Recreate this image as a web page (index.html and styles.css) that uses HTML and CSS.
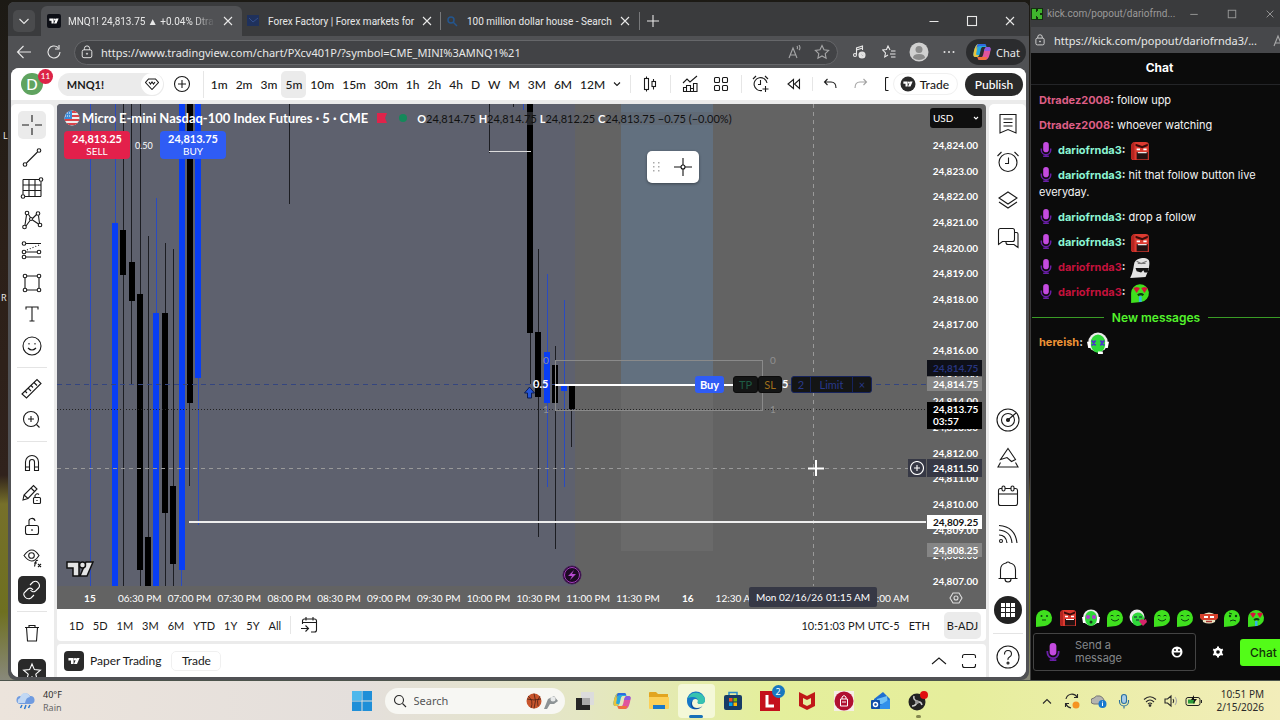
FILE: index.html
```html
<!DOCTYPE html>
<html lang="en">
<head>
  <meta charset="UTF-8">
  <meta name="viewport" content="width=device-width, initial-scale=1.0">
  <title>MNQ1! 24,813.75</title>
  <link rel="stylesheet" href="styles.css">
</head>
<body>
  <!-- shared symbols -->
  <svg class="defs" aria-hidden="true">
    <symbol id="tv" viewBox="0 0 28 16"><path d="M1 1h12v14H7V7H1zM20 1h7l-6 14h-7z"/><circle cx="16.5" cy="4" r="3"/></symbol>
    <symbol id="lock" viewBox="0 0 16 16"><rect x="2.500" y="5.500" width="11" height="9" rx="2"/><path d="M5 5.500V4a3 3 0 0 1 6 0v1.500"/><circle cx="8" cy="10" r=".7"/></symbol>
    <symbol id="close" viewBox="0 0 12 12"><path d="M2 2l8 8M10 2l-8 8"/></symbol>
    <symbol id="min" viewBox="0 0 12 12"><path d="M1.500 6.500h9"/></symbol>
    <symbol id="max" viewBox="0 0 12 12"><rect x="1.500" y="1.500" width="9" height="9"/></symbol>
    <symbol id="cross" viewBox="0 0 28 28"><path d="M14 4v7M14 17v7M4 14h7M17 14h7"/></symbol>
    <symbol id="mic" viewBox="0 0 12 16"><path d="M1 7v1.500a5 5 0 0 0 10 0V7M6 13v2M3 15.200h6" fill="none" stroke="#6a1fa8" stroke-width="1.600"/><rect x="3" y="0" width="6" height="11" rx="3" fill="#c44be0"/></symbol>
    <symbol id="copilot" viewBox="0 0 20 20">
      <path d="M7 2h5c2 0 2 1 2.500 3H11c-2 0-2 2-3 6s-2 4-4 4c-3 0-3-2-2-6S4 2 7 2z" fill="#25a8dd"/>
      <path d="M6 2C4 3 3 5 2 9c-1 4-1 6 2 6 1 0 2 0 3-2H5c-1 0-1-1-.5-3z" fill="#e8c33c"/>
      <path d="M7 2h5c1 0 2 .5 2.200 2H8c-2 0-3 1-4 4 1-4 1-6 3-6z" fill="#2f6be0"/>
      <path d="M13 18H8c-2 0-2-1-2.500-3H9c2 0 2-2 3-6s2-4 4-4c3 0 3 2 2 6s-2 7-5 7z" fill="#e0559c"/>
      <path d="M13 18H8c-2 0-2-1-2.500-3H15c0 2-1 3-2 3z" fill="#f0703c"/>
      <path d="M12 9c1-4 2-4 4-4 3 0 3 2 2 4z" fill="#8a5be0"/>
    </symbol>
    <symbol id="e-green" viewBox="0 0 18 18"><path d="M1 18V9a8 8 0 1 1 9 8z" fill="#3fe01e"/><circle cx="6.500" cy="7" r="1" fill="#0c4010"/><circle cx="12" cy="7" r="1" fill="#0c4010"/><path d="M7 11h4" stroke="#0c4010" fill="none"/></symbol>
    <symbol id="e-smile" viewBox="0 0 18 18"><path d="M1 18V9a8 8 0 1 1 9 8z" fill="#3fe01e"/><path d="M4.500 7q1.500-1.500 3 0M10.500 7q1.500-1.500 3 0M5 10q4 4 8 0" stroke="#0c4010" fill="none"/></symbol>
    <symbol id="e-think" viewBox="0 0 18 18"><path d="M1 18V9a8 8 0 1 1 9 8z" fill="#3fe01e"/><circle cx="7" cy="7" r="1.200" fill="#0c4010"/><circle cx="13" cy="7" r="1.200" fill="#0c4010"/><path d="M6 4l3 1M7 12q3-2 6 0" stroke="#0c4010" fill="none"/></symbol>
    <symbol id="e-love" viewBox="0 0 18 18"><path d="M1 18V9a8 8 0 1 1 9 8z" fill="#3fe01e"/><path d="M3 4.500l3-1 3 1L6 9zM10 4.500l3-1 3 1L13 9z" fill="#d8123c"/><path d="M7 11q3-2 5 0" stroke="#0c4010" stroke-width="2" fill="none"/><path d="M8 12h2.500v5H8z" fill="#33b4e8"/></symbol>
    <symbol id="e-red" viewBox="0 0 18 18"><path d="M1 16V5q0-4 4-4h9q3 0 3 3v13H2z" fill="#dc3a30"/><path d="M1 16V5q0-3 3-4v16z" fill="#b52520"/><path d="M5 2.500l6 2 5-2v2l-5 2-6-2z" fill="#3a0c0a"/><path d="M6 7.500h3M12 7.500h3" stroke="#fff" stroke-width="1.500"/><path d="M6 10h10v6.500H6z" fill="#231212"/><path d="M7 10.500h8" stroke="#fff"/></symbol>
    <symbol id="e-wojak" viewBox="0 0 18 18"><path d="M0 18C3 13 3 8 4 4c3-5 11-5 13-2 1 3 0 5 0 8l-3 7z" fill="#e4e4e4"/><path d="M6 3l4 2 5-2M7 5h7" stroke="#777" fill="none"/><path d="M5 9l12 0-1 4h-3l-1-2-2 2-4-1z" fill="#151515"/></symbol>
    <symbol id="e-phones" viewBox="0 0 18 18"><circle cx="9" cy="8.500" r="8" fill="#ececec"/><path d="M3 9a6 7 0 0 1 12 0c0 5-3 8-6 8s-6-3-6-8z" fill="#2fd83a"/><path d="M4 7l3 4M7 7l-3 4M11 7l3 4M14 7l-3 4" stroke="#4b35c8" stroke-width="1.500"/><path d="M0 8h3v5H1zM15 8h3l-1 5h-2zM9 16h4v2H9z" fill="#fff"/></symbol>
    <symbol id="e-pink" viewBox="0 0 18 18"><circle cx="9" cy="8.500" r="8" fill="#ececec"/><path d="M3 9a6 7 0 0 1 12 0c0 5-3 8-6 8s-6-3-6-8z" fill="#2fd83a"/><path d="M0 8h3v6H1zM15 8h3l-1 6h-2z" fill="#fff"/><circle cx="6" cy="8" r="2" fill="#b13ad0"/><circle cx="12" cy="8" r="2" fill="#b13ad0"/><circle cx="9" cy="13" r="1.500" fill="#153b18"/></symbol>
    <symbol id="e-heart" viewBox="0 0 18 18"><circle cx="8" cy="8" r="7.500" fill="#ececec"/><path d="M3 10a6 6 0 0 1 12-1c1 5-3 8-6 8s-6-2-6-7z" fill="#2fd83a"/><path d="M5 8h3M10 8h3M7 11h3" stroke="#123"/><path d="M10 12l3-2 2 1 2-1 1 3-4 4z" fill="#d6256b"/></symbol>
    <symbol id="e-burger" viewBox="0 0 18 18"><path d="M2 6q7-5 14 0l-1 7q-6 3-12 0z" fill="#e9e2c0"/><path d="M0 5h18v4l-2 2H2L0 9z" fill="#d4402c"/><path d="M4 8h4M10 8h4" stroke="#fff" stroke-width="2"/><path d="M6 12.500h6" stroke="#a33" stroke-width="1.500"/></symbol>
  </svg>

  <div class="desktop">
    <span class="desk-label desk-l">L</span>
    <span class="desk-label desk-r">R</span>

    <div class="windows">
      <main class="browser">
        <header class="tabs">
          <button class="tab-search" aria-label="Search tabs"><svg class="icon s12" viewBox="0 0 12 12"><path d="M1.500 4L6 8.500 10.500 4"/></svg></button>
          <div class="tab active">
            <svg class="fav" viewBox="0 0 14 14"><rect width="14" height="14" rx="2" fill="#0d0f16"/><use href="#tv" x="2" y="4" width="10" height="6" fill="#fff"/></svg>
            <span>MNQ1! 24,813.75 ▲ +0.04% Dtra</span>
            <button aria-label="Close tab"><svg class="icon s12"><use href="#close"/></svg></button>
          </div>
          <div class="tab">
            <svg class="fav" viewBox="0 0 14 14"><rect y="1" width="12" height="11" fill="#1f315c"/><path d="M2 4l4 4 5-4" stroke="#35508c" fill="none"/></svg>
            <span>Forex Factory | Forex markets for</span>
            <button aria-label="Close tab"><svg class="icon s12"><use href="#close"/></svg></button>
          </div>
          <div class="tab">
            <svg class="fav" viewBox="0 0 14 14"><circle cx="5" cy="6" r="3" stroke="#24568f" stroke-width="1.500" fill="none"/><path d="M7 8l4 4" stroke="#24568f" stroke-width="1.500"/></svg>
            <span>100 million dollar house - Search</span>
            <button aria-label="Close tab"><svg class="icon s12"><use href="#close"/></svg></button>
          </div>
          <button class="new-tab" aria-label="New tab"><svg class="icon s12" viewBox="0 0 12 12"><path d="M6 0v12M0 6h12"/></svg></button>
          <div class="win-controls">
            <button aria-label="Minimize"><svg class="icon s12"><use href="#min"/></svg></button>
            <button aria-label="Maximize"><svg class="icon s12"><use href="#max"/></svg></button>
            <button aria-label="Close"><svg class="icon s12"><use href="#close"/></svg></button>
          </div>
        </header>

        <div class="navbar">
          <button class="nav-btn" aria-label="Back"><svg class="icon s16" viewBox="0 0 16 16"><path d="M15 8H1.500M7.500 2l-6 6 6 6"/></svg></button>
          <button class="nav-btn" aria-label="Reload"><svg class="icon s16" viewBox="0 0 16 16"><path d="M14 8a6 6 0 1 1-2-4.500M13 1v4H9"/></svg></button>
          <label class="address">
            <svg class="icon s14"><use href="#lock"/></svg>
            <input type="text" aria-label="Address" value="https://www.tradingview.com/chart/PXcv401P/?symbol=CME_MINI%3AMNQ1%21">
            <svg class="icon s14 dim" viewBox="0 0 14 14"><path d="M1 13L5 3l4 10M2.500 10h5M9 4q1-1 0-3M11 5q2-2 0-5"/></svg>
            <svg class="icon s16 dim" viewBox="0 0 16 16"><path d="M8 1.500l2 4.300 4.600.6-3.400 3.200.9 4.700L8 12l-4.100 2.300.9-4.700L1.400 6.400 6 5.800z"/></svg>
          </label>
          <div class="nav-icons">
            <button aria-label="Media"><svg class="icon s14" viewBox="0 0 14 14"><circle cx="3" cy="10" r="1.500"/><path d="M4.500 10V3l6-2v4M4.500 5l6-2"/><circle cx="10" cy="10" r="3" fill="#ddd"/><path d="M9 8.500l2.500 1.500L9 11.500z" fill="#333"/></svg></button>
            <button aria-label="Favorites"><svg class="icon s14" viewBox="0 0 14 14"><path d="M8 5L6 1 4.500 4.500.8 5 3.500 8l-.8 4L6 10M9 6h4.500M8 9h5.500M9 12h4.500"/></svg></button>
            <button aria-label="Profile"><svg class="s20" viewBox="0 0 20 20"><circle cx="10" cy="10" r="9.500" fill="#d0d0d0"/><circle cx="10" cy="7.500" r="3.500" fill="#8b8b8b"/><path d="M4 16q0-4 6-4t6 4q-6 4-12 0z" fill="#8b8b8b"/></svg></button>
            <button aria-label="More"><svg class="s14" viewBox="0 0 14 14" fill="#e5e5e5"><circle cx="2.500" cy="7" r="1"/><circle cx="7" cy="7" r="1"/><circle cx="11.500" cy="7" r="1"/></svg></button>
          </div>
          <button class="copilot"><svg class="s20"><use href="#copilot"/></svg>Chat</button>
        </div>

        <div class="tv">
          <div class="tv-top">
            <div class="user">D<span class="badge">11</span></div>
            <button class="symbol">MNQ1!<span><svg class="icon s14" viewBox="0 0 14 14"><path d="M3.500 2h7L13.500 5.500 7 12.500.5 5.500zM4 5l1.500 2L7 5l1.500 2L10 5"/></svg></span></button>
            <button class="add" aria-label="Compare"><svg class="icon s18" viewBox="0 0 18 18"><circle cx="9" cy="9" r="7.500"/><path d="M9 5v8M5 9h8"/></svg></button>
            <div class="intervals">
              <button>1m</button><button>2m</button><button>3m</button><button class="on">5m</button><button>10m</button><button>15m</button><button>30m</button><button>1h</button><button>2h</button><button>4h</button><button>D</button><button>W</button><button>M</button><button>3M</button><button>6M</button><button>12M</button>
              <button aria-label="More intervals"><svg class="icon s8" viewBox="0 0 8 8"><path d="M1 2.500l3 3 3-3"/></svg></button>
            </div>
            <div class="tools">
              <button class="bar" aria-label="Candles"><svg class="icon s18" viewBox="0 0 18 18"><path d="M5.500 1.500v2M5.500 14.500v2M12.500 4v2.500M12.500 11.500v3"/><rect x="3.500" y="3.500" width="4" height="11"/><rect x="11" y="6.500" width="3.500" height="5"/></svg></button>
              <button class="bar" aria-label="Indicators"><svg class="icon s18" viewBox="0 0 18 18"><path d="M2 8l4-4 3 3 7-6M2.500 16.500v-4h3v-2h4v3h3v-5h3.500v8zM5.500 12.500v4M9.500 13v3.500M12.500 13v3.500"/></svg></button>
              <button class="near" aria-label="Templates"><svg class="icon s18" viewBox="0 0 18 18"><rect x="2.500" y="2.500" width="5" height="5" rx="1"/><rect x="10.500" y="2.500" width="5" height="5" rx="1"/><rect x="2.500" y="10.500" width="5" height="5" rx="1"/><rect x="10.500" y="10.500" width="5" height="5" rx="1"/></svg></button>
              <button class="bar" aria-label="Alert"><svg class="icon s18" viewBox="0 0 18 18"><path d="M15 8a6.500 6.500 0 1 0-5 7.500M8.500 5v4.500H6M1 4l3-3M13 1l3 3M13.500 11v6M10.500 14h6"/></svg></button>
              <button class="far" aria-label="Replay"><svg class="icon s14" viewBox="0 0 14 14"><path d="M6.500 2.500v9L1 7zM12.500 2.500v9L7.500 7z"/></svg></button>
              <button class="bar" aria-label="Undo"><svg class="icon s14" viewBox="0 0 14 14"><path d="M4.500 2L1.500 5l3 3M1.500 5H8q5 0 5 6"/></svg></button>
              <button class="far faded" aria-label="Redo"><svg class="icon s14" viewBox="0 0 14 14"><path d="M9.500 2l3 3-3 3M12.500 5H6q-5 0-5 6"/></svg></button>
              <svg class="icon far bracket" viewBox="0 0 4 14"><path d="M3.500.5h-2q-1 0-1 1v11q0 1 1 1h2"/></svg>
            </div>
            <button class="trade"><svg class="s16" viewBox="0 0 16 16"><circle cx="8" cy="8" r="7.500" fill="#2a2a2a"/><use href="#tv" x="3" y="5" width="10" height="6" fill="#fff"/></svg>Trade</button>
            <button class="publish">Publish</button>
          </div>

          <div class="tv-body">
            <nav class="left-tools">
              <div class="group g8">
                <button class="soft" aria-label="Cross"><svg class="icon s28"><use href="#cross"/></svg></button>
                <button aria-label="Trend line"><svg class="icon s28" viewBox="0 0 28 28"><path d="M8.500 20L19.500 9"/><circle cx="7" cy="21.500" r="1.800"/><circle cx="21" cy="7.500" r="1.800"/></svg></button>
                <button aria-label="Gann and Fibonacci"><svg class="icon s28" viewBox="0 0 28 28"><path d="M5 5.500h16M23 7.500v15M7 22.500h16M5 5.500v15M5 11h18M5 16.500h18M11 5.500v17M17 5.500v17"/><circle cx="23" cy="5.500" r="1.800"/><circle cx="5" cy="22.500" r="1.800"/></svg></button>
                <button aria-label="Patterns"><svg class="icon s28" viewBox="0 0 28 28"><circle cx="9" cy="7" r="1.800"/><circle cx="20" cy="7.500" r="1.800"/><circle cx="6.500" cy="21" r="1.800"/><circle cx="22" cy="19" r="1.800"/><circle cx="13" cy="13" r="1.500"/><path d="M8.500 9L7 19M10.500 8.500l2 3M14.500 12.500l4-4M20.500 9.500l1 8M8 20l4-5.500M14.500 14l6 4"/></svg></button>
                <button aria-label="Projection"><svg class="icon s28" viewBox="0 0 28 28"><circle cx="6" cy="6.500" r="1.800"/><circle cx="6" cy="15" r="1.800"/><circle cx="21" cy="15" r="1.800"/><circle cx="6" cy="20" r="1.800"/><path d="M8 6.500h15M8 15h11M8 20h15"/><path d="M9 13l12-5" stroke-dasharray="1 2"/></svg></button>
                <button aria-label="Shapes"><svg class="icon s28" viewBox="0 0 28 28"><path d="M9 7h10M9 21h10M7 9v10M21 9v10"/><circle cx="7" cy="7" r="1.800"/><circle cx="21" cy="7" r="1.800"/><circle cx="7" cy="21" r="1.800"/><circle cx="21" cy="21" r="1.800"/></svg></button>
                <button aria-label="Text"><svg class="icon s28" viewBox="0 0 28 28"><path d="M8 9.500V7h12v2.500M14 7v14M11.500 21h5"/></svg></button>
                <button aria-label="Emoji"><svg class="icon s28" viewBox="0 0 28 28"><circle cx="14" cy="14" r="9"/><path d="M10 16q4 4 8 0M11 11v1.500M17 11v1.500"/></svg></button>
              </div>
              <hr>
              <div class="group g2">
                <button aria-label="Measure"><svg class="icon s28" viewBox="0 0 28 28"><path d="M4 19L19 4.500l4 4L8.500 23zM7 16l2 2M10 13l3 3M13 10.500l2 2M16 7.500l3 3"/></svg></button>
                <button aria-label="Zoom in"><svg class="icon s28" viewBox="0 0 28 28"><circle cx="13" cy="13" r="7.500"/><path d="M13 10v6M10 13h6M18.500 18.500l3 3"/></svg></button>
              </div>
              <hr>
              <div class="group g5">
                <button aria-label="Magnet"><svg class="icon s28" viewBox="0 0 28 28"><path d="M7.500 21.500V13a6.500 6.500 0 0 1 13 0v8.500h-4V13a2.500 2.500 0 0 0-5 0v8.500zM7.500 18h4M16.500 18h4"/></svg></button>
                <button aria-label="Lock drawing mode"><svg class="icon s28" viewBox="0 0 28 28"><path d="M5 19l1-5L15.500 4.500l3.500 3.500L10 17.500zM6 14l4 3.500M13 7l3.500 3.500"/><rect x="15.500" y="16.500" width="7" height="6" rx="1"/><path d="M17 16.500v-2q2-3 4-1M19 19v1"/></svg></button>
                <button aria-label="Lock all"><svg class="icon s28" viewBox="0 0 28 28"><rect x="7.500" y="12.500" width="13" height="9" rx="2"/><path d="M11 12.500V9a3 3 0 0 1 6-1M14 16v2"/></svg></button>
                <button aria-label="Hide"><svg class="icon s28" viewBox="0 0 28 28"><path d="M6 11.500q8-11 15 0-7 11-15 0z"/><circle cx="13.500" cy="11.500" r="2.800"/><path d="M20 16.500q-2-1-2.500 2l-1 4M16 19h3M20 20l3 3M23 20l-3 3"/></svg></button>
                <button class="dark" aria-label="Link"><svg class="icon s28" viewBox="0 0 28 28"><path d="M12 9l3-3q3.500-2 5.500 1t0 5l-3 3q-3 2-5-1M16 19l-3 3q-3.500 2-6-1t0-5l3-3q3-2 5 1"/></svg></button>
              </div>
              <hr>
              <button aria-label="Remove"><svg class="icon s28" viewBox="0 0 28 28"><path d="M7 8.500h14M11 8.500v-2h6v2M8.500 8.500l1 13.500h9l1-13.500"/></svg></button>
              <button class="dark star" aria-label="Favorites toolbar"><svg class="icon s28" viewBox="0 0 28 28"><path d="M14 5l2.400 5.600 6 .5-4.600 4 1.400 6L14 17.900l-5.200 3.200 1.400-6-4.600-4 6-.5z"/></svg></button>
            </nav>

            <section class="center">
              <div class="chart">
                <div class="plot">
                  <svg class="candles" width="100%" height="100%">
                    <!-- session shading -->
                    <rect width="518" height="100%" fill="#5e616e"/>
                    <rect x="564" width="92" height="280" fill="#62707f"/>
                    <rect x="564" y="280" width="92" height="167" fill="#6a6a6a"/>
                    <!-- wicks -->
                    <path class="wick up" d="M33.500 0v482M58.500 0v482M99.500 94v388M124.500 0v482M141.500 0v421M466.500 0v6M490.500 170v213M507.500 196v187"/>
                    <path class="wick down" d="M66.500 0v482M74.500 0v280M83.500 0v482M91.500 132v350M108.500 139v343M116.500 145v337M132.500 0v382M232.500 0v100M432.500 0v49M456.500 0v3M473.500 0v280M481.500 145v288M498.500 242v203M514.500 282v61"/>
                    <!-- bodies -->
                    <path class="body-up" d="M55 119h6v363h-6zM96 209h6v273h-6zM122 0h6v466h-6zM138 0h6v274h-6zM487 248h6v51h-6zM504 282h6v5h-6z"/>
                    <path class="body-down" d="M63 126h6v45h-6zM72 158h6v39h-6zM80 190h6v276h-6zM88 433h6v49h-6zM105 209h6v200h-6zM113 382h6v78h-6zM130 0h6v299h-6zM470 0h6v229h-6zM478 228h6v65h-6zM495 261h6v38h-6zM512 282h6v23h-6z"/>
                    <!-- levels -->
                    <path d="M0 280.500h869" stroke="#34457f" stroke-dasharray="5 4"/>
                    <path d="M0 305.500h869" stroke="#222" stroke-dasharray="1 2"/>
                    <path d="M0 364.500h869M756.500 0v482" stroke="#999" stroke-dasharray="4 4"/>
                    <path d="M432 47.500h42" stroke="#ddd"/>
                    <path d="M132 418h737" stroke="#eee" stroke-width="2"/>
                    <rect x="498.500" y="256.500" width="207" height="50" fill="none" stroke="#8a8a8a"/>
                    <path d="M498 281h178" stroke="#fff" stroke-width="2"/>
                    <path d="M472.500 283l-5 6h3v5h4v-5h3z" fill="#2455d8" stroke="#0c1c50"/>
                    <path d="M759 356v16M751 364.500h16" stroke="#fff" stroke-width="2"/>
                    <text class="lvl" x="486" y="260">0</text>
                    <text class="lvl" x="486" y="309">1</text>
                    <text class="lvl" x="713" y="260">0</text>
                    <text class="lvl" x="713" y="309">1</text>
                    <text class="half" x="476" y="284">0.5</text>
                  </svg>

                  <div class="legend">
                    <div class="title">
                      <svg class="s16" viewBox="0 0 16 16"><clipPath id="round"><circle cx="8" cy="8" r="7.500"/></clipPath><g clip-path="url(#round)"><path fill="#eee" d="M0 0h16v16H0z"/><path d="M0 2h16M0 6h16M0 10h16M0 14h16" stroke="#d8434a" stroke-width="2"/><path d="M0 0h8v9H0z" fill="#3c8bd9"/><path d="M1 3h6M1 6h6" stroke="#fff" stroke-dasharray="1 1"/></g></svg>
                      <h1>Micro E-mini Nasdaq-100 Index Futures · 5 · CME</h1>
                      <svg class="flag" viewBox="0 0 10 10"><path d="M0 0h10L8 5l2 5H0z" fill="#e0234a"/></svg>
                      <span class="dot"></span>
                      <p class="ohlc"><b>O</b>24,814.75 <b>H</b>24,814.75 <b>L</b>24,812.25 <b>C</b>24,813.75 −0.75 (−0.00%)</p>
                    </div>
                    <div class="quotes">
                      <button class="sell"><b>24,813.25</b>SELL</button>
                      <span>0.50</span>
                      <button class="buy"><b>24,813.75</b>BUY</button>
                    </div>
                  </div>

                  <div class="float-tools">
                    <svg class="s8x14" viewBox="0 0 8 14" fill="#aaa"><path d="M0 2h1.500v1.500H0zM5 2h1.500v1.500H5zM0 6h1.500v1.500H0zM5 6h1.500v1.500H5zM0 10h1.500v1.500H0zM5 10h1.500v1.500H5z"/></svg>
                    <button aria-label="Cross"><svg class="icon s20" viewBox="0 0 20 20"><path d="M10 1v7M10 12v7M1 10h7M12 10h7"/><circle cx="10" cy="10" r="2"/></svg></button>
                  </div>

                  <div class="order">
                    <button class="o-buy">Buy</button>
                    <button class="tp">TP</button>
                    <button class="sl">SL</button>
                    <span class="o-five">5</span>
                    <div class="limit"><span>2</span><span>Limit</span><button aria-label="Cancel order">×</button></div>
                  </div>

                  <svg class="tv-logo" viewBox="0 0 28 16"><use href="#tv" width="28" height="16"/></svg>
                  <svg class="bolt" viewBox="0 0 20 20"><circle cx="10" cy="10" r="9" fill="#1d0a24" stroke="#49185c"/><circle cx="10" cy="10" r="7.500" fill="none" stroke="#a63cc0"/><path d="M12 5l-6 6h4l-2 4 6-6h-4z" fill="#b64ad0"/></svg>
                </div>

                <div class="prices">
                  <span>24,824.00</span><span>24,823.00</span><span>24,822.00</span><span>24,821.00</span><span>24,820.00</span><span>24,819.00</span><span>24,818.00</span><span>24,817.00</span><span>24,816.00</span><span>24,815.00</span><span>24,814.00</span><span>24,813.00</span><span>24,812.00</span><span>24,811.00</span><span>24,810.00</span><span>24,809.00</span><span>24,808.00</span><span>24,807.00</span>
                  <select class="currency" aria-label="Currency"><option>USD</option></select>
                  <svg class="icon currency-arrow" viewBox="0 0 8 8"><path d="M2 3l2 2 2-2"/></svg>
                  <div class="tag t-order">24,814.75</div>
                  <div class="tag t-grey t-mid">24,814.75</div>
                  <div class="tag t-last">24,813.75<br>03:57</div>
                  <div class="tag t-cross">24,811.50</div>
                  <button class="plus" aria-label="Add order"><svg class="icon s14" viewBox="0 0 14 14"><circle cx="7" cy="7" r="6.500"/><path d="M7 4v6M4 7h6"/></svg></button>
                  <div class="tag t-white">24,809.25</div>
                  <div class="tag t-grey t-low">24,808.25</div>
                </div>

                <div class="times">
                  <b>15</b><span>06:30 PM</span><span>07:00 PM</span><span>07:30 PM</span><span>08:00 PM</span><span>08:30 PM</span><span>09:00 PM</span><span>09:30 PM</span><span>10:00 PM</span><span>10:30 PM</span><span>11:00 PM</span><span>11:30 PM</span><b>16</b><span>12:30 AM</span><span></span><span></span><span>02:00 AM</span>
                  <div class="time-tag"><span>Mon 02/16/26</span><span>01:15 AM</span></div>
                </div>
                <button class="axis-set" aria-label="Axis settings"><svg class="icon s14" viewBox="0 0 14 14"><path d="M4 2h6l3 5-3 5H4L1 7z"/><circle cx="7" cy="7" r="2"/></svg></button>
              </div>

              <div class="ranges">
                <button>1D</button><button>5D</button><button>1M</button><button>3M</button><button>6M</button><button>YTD</button><button>1Y</button><button>5Y</button><button>All</button>
                <button class="goto" aria-label="Go to date"><svg class="icon s18" viewBox="0 0 18 18"><path d="M2.500 8V5q0-2 2-2h10q2 0 2 2v9q0 2-2 2H11M2.500 6.500h14M6 1v3.500M13 1v3.500M1 12.500h7M5.500 9.500l3 3-3 3"/></svg></button>
                <span class="clock">10:51:03 PM UTC-5</span>
                <button>ETH</button>
                <button class="adj">B-ADJ</button>
              </div>

              <footer class="panel">
                <svg class="s20" viewBox="0 0 20 20"><rect width="20" height="20" rx="4" fill="#2a2a2a"/><use href="#tv" x="4" y="6" width="12" height="8" fill="#fff"/></svg>
                <span>Paper Trading</span>
                <button class="panel-trade">Trade</button>
                <button class="up" aria-label="Open panel"><svg class="icon s16" viewBox="0 0 16 16"><path d="M1 11l7-6 7 6"/></svg></button>
                <button aria-label="Maximize panel"><svg class="icon s16" viewBox="0 0 16 16"><path d="M1.500 5V3.500q0-2 2-2h9q2 0 2 2V5M1.500 11v1.500q0 2 2 2h9q2 0 2-2V11"/></svg></button>
              </footer>
            </section>

            <nav class="right-tools">
              <button aria-label="Watchlist"><svg class="icon s24" viewBox="0 0 24 24"><path d="M4 2.500h16v18.500l-8-3.500L4 21zM7.500 7h9M7.500 10.500h9M7.500 14h9"/></svg></button>
              <button aria-label="Alerts"><svg class="icon s24" viewBox="0 0 24 24"><circle cx="12" cy="12.500" r="9"/><path d="M12.500 7.500v6H9M1.500 6l4-4M18.500 2l4 4"/></svg></button>
              <button aria-label="Object tree"><svg class="icon s24" viewBox="0 0 24 24"><path d="M12 4l9 6-9 6-9-6zM3 14l9 6 9-6"/></svg></button>
              <button aria-label="Chats"><svg class="icon s24" viewBox="0 0 24 24"><path d="M2.500 18.500V4.500q0-2 2-2h12q2 0 2 2v9q0 2-2 2H6.500zM18.500 6.500h2q1.500 0 1.500 1.500v13.500l-4-3h-6q-2 0-2-2v-1"/></svg></button>
              <div class="space"></div>
              <button aria-label="Screener"><svg class="icon s24" viewBox="0 0 24 24"><circle cx="12" cy="12" r="11"/><circle cx="12" cy="12" r="6.500"/><circle cx="12" cy="12" r="1.500" fill="#222"/><path d="M13 11l7-6"/></svg></button>
              <button aria-label="Pine"><svg class="icon s24" viewBox="0 0 24 24"><path d="M12 2.500l7.500 11-4 2-4.500-4-6.500 2zM4.500 16.500L2 21h20l-2.500-4.500"/></svg></button>
              <button aria-label="Calendar"><svg class="icon s24" viewBox="0 0 24 24"><rect x="2.500" y="4.500" width="19" height="17" rx="2"/><path d="M2.500 10h19"/><rect x="6" y="2" width="3" height="5" rx="1.500" fill="#fff"/><rect x="15" y="2" width="3" height="5" rx="1.500" fill="#fff"/></svg></button>
              <button aria-label="News"><svg class="icon s24" viewBox="0 0 24 24"><circle cx="5" cy="19" r="1.500"/><path d="M3 13q7 0 8 8M3 8q12 1 13 13M3 3.500q16 1 18 17.500"/></svg></button>
              <button aria-label="Notifications"><svg class="icon s24" viewBox="0 0 24 24"><path d="M2.500 18.500h19M4.500 18.500V10q0-6 5.500-7 2-2 4 0 5.500 1 5.500 7v8.500M9 19q0 3 3 3t3-3"/></svg></button>
              <button class="apps-btn" aria-label="Products"><svg class="s28" viewBox="0 0 28 28"><circle cx="14" cy="14" r="14" fill="#222"/><path fill="#fff" d="M7 7h4v4H7zM12 7h4v4h-4zM17 7h4v4h-4zM7 12h4v4H7zM12 12h4v4h-4zM17 12h4v4h-4zM7 17h4v4H7zM12 17h4v4h-4zM17 17h4v4h-4z"/></svg></button>
              <hr>
              <button aria-label="Help"><svg class="icon s24" viewBox="0 0 24 24"><circle cx="12" cy="12" r="11"/><path d="M8.500 9.500q0-4 3.500-4t3.500 3.500q0 2-2 3t-1.500 3"/><circle cx="12" cy="18" r="1"/></svg></button>
            </nav>
          </div>
        </div>
      </main>

      <aside class="kick">
        <div class="kick-title">
          <svg class="s12" viewBox="0 0 12 12"><path fill="#14300f" d="M0 0h12v12H0z"/><path d="M1 1h4v3h1V3h1V1h4v4H9v2h2v4H7V9H6V8H5v3H1z" fill="#3fb52d"/></svg>
          <span>kick.com/popout/dariofrnd...</span>
          <button aria-label="Minimize"><svg class="icon s10" viewBox="0 0 12 12"><use href="#min"/></svg></button>
          <button aria-label="Maximize"><svg class="icon s10" viewBox="0 0 12 12"><use href="#max"/></svg></button>
          <button aria-label="Close"><svg class="icon s10" viewBox="0 0 12 12"><use href="#close"/></svg></button>
        </div>
        <div class="kick-url">
          <svg class="icon s12"><use href="#lock"/></svg>
          <span>https://kick.com/popout/dariofrnda3/...</span>
          <svg class="icon s14 dim" viewBox="0 0 14 14"><path d="M1 13L5 3l4 10M2.500 10h5M9 4q1-1 0-3M11 5q2-2 0-5"/></svg>
        </div>
        <h2>Chat</h2>
        <div class="messages">
          <p><b class="pink">Dtradez2008</b><b>:</b> follow upp</p>
          <p><b class="pink">Dtradez2008</b><b>:</b> whoever watching</p>
          <p><svg class="mic"><use href="#mic"/></svg><b class="mint">dariofrnda3</b><b>:</b> <svg class="emote"><use href="#e-red"/></svg></p>
          <p><svg class="mic"><use href="#mic"/></svg><b class="mint">dariofrnda3</b><b>:</b> hit that follow button live everyday.</p>
          <p><svg class="mic"><use href="#mic"/></svg><b class="mint">dariofrnda3</b><b>:</b> drop a follow</p>
          <p><svg class="mic"><use href="#mic"/></svg><b class="mint">dariofrnda3</b><b>:</b> <svg class="emote"><use href="#e-red"/></svg></p>
          <p><svg class="mic"><use href="#mic"/></svg><b class="red">dariofrnda3</b><b>:</b> <svg class="emote"><use href="#e-wojak"/></svg></p>
          <p><svg class="mic"><use href="#mic"/></svg><b class="red">dariofrnda3</b><b>:</b> <svg class="emote"><use href="#e-love"/></svg></p>
          <div class="new">New messages</div>
          <p><b class="orange">hereish</b><b>:</b> <svg class="emote big"><use href="#e-phones"/></svg></p>
        </div>
        <div class="emotes">
          <svg><use href="#e-green"/></svg><svg><use href="#e-red"/></svg><svg><use href="#e-pink"/></svg><svg><use href="#e-smile"/></svg><svg><use href="#e-heart"/></svg><svg><use href="#e-smile"/></svg><svg><use href="#e-smile"/></svg><svg><use href="#e-burger"/></svg><svg><use href="#e-think"/></svg><svg><use href="#e-love"/></svg>
        </div>
        <form class="send">
          <label class="box">
            <svg class="mic-lg"><use href="#mic"/></svg>
            <textarea rows="2" placeholder="Send a message" aria-label="Send a message"></textarea>
            <svg class="s12" viewBox="0 0 12 12"><circle cx="6" cy="6" r="5.500" fill="#fff"/><path d="M3 4h2M7 4h2" stroke="#111" stroke-width="1.500"/><path d="M2.500 6.500h7q-1 3.500-3.500 3.500T2.500 6.500z" fill="#111"/></svg>
          </label>
          <button type="button" class="gear" aria-label="Settings"><svg class="s12" viewBox="0 0 12 12"><circle cx="6" cy="6" r="3" fill="none" stroke="#fff" stroke-width="2.500"/><path d="M6 .5v11M1.200 3.300l9.600 5.500M10.800 3.300L1.200 8.800" stroke="#fff" stroke-width="2"/><circle cx="6" cy="6" r="1.800" fill="#0b0b0b"/></svg></button>
          <button type="button" class="chat-btn">Chat</button>
        </form>
      </aside>
    </div>

    <footer class="taskbar">
      <div class="weather">
        <svg class="s20" viewBox="0 0 20 20"><path d="M4 13a4 4 0 0 1 1-8 5 5 0 0 1 9 0 4 4 0 0 1 1 8z" fill="#6f9be0"/><path d="M2 12q-1-4 2-5 1-5 5-5 4 0 5 4-4 0-5 6z" fill="#c2d8f3"/><path d="M6 14l-1.500 3M10 14l-1.500 4M14 14l-1.500 3" stroke="#2a7ad2" stroke-width="1.500"/></svg>
        <p>40°F<span>Rain</span></p>
      </div>
      <div class="dock">
        <button class="app" aria-label="Start"><svg class="s20" viewBox="0 0 20 20"><path d="M0 0h9.500v9.500H0zM10.500 0H20v9.500h-9.500zM0 10.500h9.500V20H0zM10.500 10.500H20V20h-9.500z" fill="#1f8fd8"/><path d="M0 0h9.500v9.500H0z" fill="#4db8ec"/></svg></button>
        <label class="search">
          <svg class="icon s14" viewBox="0 0 14 14"><circle cx="6" cy="6" r="4.500"/><path d="M9.500 9.500L13 13"/></svg>
          <input type="text" placeholder="Search" aria-label="Search">
          <svg class="sport" viewBox="0 0 34 18"><circle cx="9" cy="9" r="7.500" fill="#c8552c"/><path d="M2 7q7 2 14 0M9 1.500q3 7 0 15M3 4q6 5 3 12M15 4q-4 5-2 10" stroke="#4a2015" fill="none" stroke-width=".8"/><path d="M19 17l4-10 6-3 4 5-4 3-4 0-3 5z" fill="#8d9395"/><circle cx="28" cy="7" r="2.500" fill="#e8eaea"/></svg>
        </label>
        <button class="app" aria-label="Task view"><svg class="s20" viewBox="0 0 20 20"><path d="M6 1h13v13H6z" fill="#dcdcdc"/><path d="M1 7h6v7h8v5H1z" fill="#262626"/><path d="M7 7h8v7H7z" fill="#a9a9a9"/></svg></button>
        <button class="app" aria-label="Copilot"><svg class="s20"><use href="#copilot"/></svg></button>
        <button class="app" aria-label="Explorer"><svg class="s20" viewBox="0 0 20 20"><path d="M0 2q0-1 1-1h6l2 2h10v14H0z" fill="#e2a520"/><path d="M0 6h20v11q0 1-1 1H1q-1 0-1-1z" fill="#fcd058"/><path d="M4 14h12v4H4z" fill="#1c79c9"/></svg></button>
        <button class="app current" aria-label="Edge"><svg class="s20" viewBox="0 0 20 20"><path d="M1 10a9 9 0 0 1 18-1c0 3-2 4-5 4-2 0-3-1-2-3 0-2-3-3-5-1s-2 7 3 9C5 19 1 15 1 10z" fill="#1677c8"/><path d="M2 7a9 9 0 0 1 17 2c0 3-2 4-5 4-2 0-3-1-2-3 0-4-5-5-10-3z" fill="#36c3b0"/><path d="M7 9c-2 3-1 8 4 8 3 0 5-1 6-3-2 4-6 5-9 4s-5-6-1-9z" fill="#0e4f9e"/></svg></button>
        <button class="app" aria-label="Store"><svg class="s20" viewBox="0 0 20 20"><path d="M6 4V1.500h8V4" fill="none" stroke="#2a8bc9" stroke-width="1.500"/><rect x="1" y="4" width="18" height="15" rx="2" fill="#173c66"/><path d="M6 7h3.500v3.500H6z" fill="#f25022"/><path d="M10.500 7H14v3.500h-3.500z" fill="#7fba00"/><path d="M6 11.500h3.500V15H6z" fill="#00a4ef"/><path d="M10.500 11.500H14V15h-3.500z" fill="#ffb900"/></svg></button>
        <button class="app" aria-label="Lively"><svg class="s20" viewBox="0 0 20 20"><path d="M0 0h20v20H0z" fill="#c4101c"/><path d="M7 4v11h7" fill="none" stroke="#fff" stroke-width="3"/></svg><span class="count">2</span></button>
        <button class="app" aria-label="McAfee"><svg class="s20" viewBox="0 0 20 20"><path d="M2 1l8 4 8-4v14l-8 4-8-4z" fill="#c01818"/><path d="M6 7l4 2 4-2v6l-4 2-4-2z" fill="#e5ef9f"/></svg></button>
        <button class="app" aria-label="Shop"><svg class="s20" viewBox="0 0 20 20"><path d="M0 0h20v20H0z" fill="#f6eee6"/><circle cx="10" cy="10" r="9.500" fill="#b01030"/><path d="M6.500 8h7v7h-7zM8 8V6q2-3 4 0v2M8 11h4" fill="none" stroke="#fff"/></svg></button>
        <button class="app" aria-label="Outlook"><svg class="s20" viewBox="0 0 20 20"><path d="M3 8l9-7 7 7v10H3z" fill="#1f6fd0"/><path d="M6 8l10-3 1 8H6z" fill="#6fc0f5"/><path d="M3 18l16-10v10z" fill="#3190ea"/><rect y="9" width="9" height="9" rx="1" fill="#0f4fa8"/><circle cx="4.500" cy="13.500" r="2" fill="none" stroke="#fff" stroke-width="1.500"/></svg></button>
        <button class="app running" aria-label="OBS"><svg class="s20" viewBox="0 0 20 20"><circle cx="9" cy="11" r="8.500" fill="#222"/><path d="M9 10q-4-1-3-5M9 11q4-1 5 3M9 11q-1 4-5 4" stroke="#ccc" stroke-width="1.500" fill="none"/><circle cx="9" cy="11" r="2" fill="#999"/><circle cx="16" cy="4" r="4" fill="#e01010"/></svg></button>
      </div>
      <div class="tray">
        <svg class="icon s12" viewBox="0 0 12 12"><path d="M2 8.500l4-4 4 4"/></svg>
        <svg class="icon s16" viewBox="0 0 16 16"><path d="M2 6a6 6 0 0 1 11-2M13.500 1v3.500H10M2 11q1 3 5 4M1.500 14v-3.500H5"/><circle cx="12" cy="12" r="3.500" fill="#f59322" stroke="none"/></svg>
        <svg class="s16" viewBox="0 0 16 16"><path d="M3 11a3 3 0 0 1 0-6q2-3 6-2 3 1 4 4v4z" fill="#b4b4b0" stroke="#777"/><circle cx="11.500" cy="11" r="4" fill="#1979cf"/><path d="M11.500 10v3M11.500 8.500v1" stroke="#fff"/></svg>
        <svg class="icon blue" viewBox="0 0 12 16"><path d="M1.500 7v1.500a4.500 4.500 0 0 0 9 0V7M6 13v2.500"/><rect x="3.500" y="1.500" width="5" height="9" rx="2.500" fill="#a8cce8"/></svg>
        <svg class="icon s14" viewBox="0 0 14 14"><path d="M1 5.500q6-5.500 12 0M3 8q4-4 8 0M5 10q2-2 4 0"/><circle cx="7" cy="11.500" r=".8" fill="#222"/></svg>
        <svg class="icon s14" viewBox="0 0 14 14"><path d="M1 5h2.500L7 2v10L3.500 9H1zM9 5q1.500 2 0 4"/><path d="M11 3q3 4 0 8" stroke="#aaa"/></svg>
        <svg class="battery" viewBox="0 0 18 12"><rect x="1" y="2.500" width="14" height="8" rx="2" fill="none" stroke="#222"/><path d="M3 4.500h7v4H3z" fill="#2c9a38"/><path d="M16.500 5v3" stroke="#222"/><path d="M9 0L6 5h3l-1 4 4-5H9z" fill="#111"/></svg>
        <p>10:51 PM<span>2/15/2026</span></p>
      </div>
    </footer>
  </div>
</body>
</html>
```

FILE: styles.css
```css
* {
  box-sizing: border-box;
}

body {
  margin: 0;
  font-family: "Noto Sans", sans-serif;
  font-size: 11px;
  color: #e8e8e8;
  background: #2a2620;
}

button,
input,
select,
textarea {
  font: inherit;
  color: inherit;
  background: none;
  border: none;
  padding: 0;
  margin: 0;
}

button {
  display: flex;
  align-items: center;
  justify-content: center;
  white-space: nowrap;
  flex: none;
}

h1, h2, p {
  margin: 0;
}

hr {
  width: 30px;
  height: 1px;
  flex: none;
  border: none;
  background: #e4e4e4;
  margin: 7px auto;
}

svg {
  flex: none;
  display: block;
}

.defs {
  position: absolute;
  width: 0;
  height: 0;
}

.icon {
  fill: none;
  stroke: currentColor;
  stroke-width: 1.1;
}

.s8 { width: 8px; height: 8px; }
.s8x14 { width: 8px; height: 14px; }
.s10 { width: 10px; height: 10px; }
.s12 { width: 12px; height: 12px; }
.s14 { width: 14px; height: 14px; }
.s16 { width: 16px; height: 16px; }
.s18 { width: 18px; height: 18px; }
.s20 { width: 20px; height: 20px; }
.s24 { width: 24px; height: 24px; }
.s28 { width: 28px; height: 28px; }
.dim { opacity: 0.6; }

.desktop {
  position: relative;
  height: 100vh;
  display: grid;
  grid-template-rows: minmax(0, 1fr) 40px;
  overflow: hidden;
  background: linear-gradient(#1c1a15, #2c2018 35%, #30221c 66%, #76702a 70%, #6e7020 85%, #8a8a80 95%);
}

.desk-label {
  position: absolute;
  left: 3px;
  font-size: 9px;
}
.desk-l { top: 129px; }
.desk-r { top: 291px; left: 1px; }

.windows {
  display: grid;
  grid-template-columns: minmax(0, 1fr) 250px;
  gap: 1px;
  padding-left: 8px;
  min-height: 0;
  position: relative;
}

/* browser window */
.browser {
  display: flex;
  flex-direction: column;
  min-width: 0;
  margin-top: 2px;
  padding: 0 3px 3px 3px;
  background: #505154;
  border-radius: 6px 6px 8px 8px;
  overflow: hidden;
}

.tabs {
  display: flex;
  align-items: center;
  height: 34px;
  flex: none;
  margin: 0 -3px;
  padding: 4px 0 0 5px;
  background: #3a3b3d;
}

.tab-search {
  width: 22px;
  height: 22px;
  margin-right: 6px;
  border-radius: 5px;
  background: #4a4b4d;
}

.tab {
  display: flex;
  align-items: center;
  gap: 7px;
  width: 199px;
  height: 18px;
  padding: 0 8px 0 5px;
  border-right: 1px solid #77787a;
}

.tab.active {
  height: 30px;
  width: 201px;
  padding-left: 6px;
  border: none;
  border-radius: 6px 6px 0 0;
  background: #505154;
}

.tab span {
  flex: 1;
  white-space: nowrap;
  font-family: Roboto, sans-serif;
  font-size: 10px;
}
.tab.active span {
  mask-image: linear-gradient(90deg, #000 85%, transparent);
}

.fav {
  width: 14px;
  height: 14px;
}

.new-tab {
  width: 26px;
}

.win-controls {
  display: flex;
  margin-left: auto;
}
.win-controls button {
  width: 38px;
  height: 24px;
}

.navbar {
  display: flex;
  align-items: center;
  height: 32px;
  flex: none;
}

.nav-btn {
  width: 26px;
  margin-right: 4px;
}

.address {
  flex: 1;
  display: flex;
  align-items: center;
  gap: 12px;
  height: 25px;
  margin-left: 3px;
  padding: 0 7px 0 5px;
  border: 1px solid #66676a;
  border-radius: 13px;
  background: #424346;
}
.address svg:first-child {
  margin-right: -5px;
}
.address input {
  flex: 1;
  min-width: 0;
}

.nav-icons {
  display: flex;
  margin-left: 6px;
}
.nav-icons button {
  width: 30px;
}

.navbar .copilot {
  gap: 4px;
  width: 60px;
  height: 26px;
  margin-left: 2px;
  border-radius: 13px;
  background: #2b2c2e;
}

/* charting app */
.tv {
  flex: 1;
  min-height: 0;
  display: flex;
  flex-direction: column;
  font-family: Lato, sans-serif;
  font-size: 12px;
  color: #1a1a1a;
  background: #ebebeb;
  border-radius: 8px;
  overflow: hidden;
}

.tv-top {
  display: flex;
  align-items: center;
  height: 32px;
  flex: none;
  padding: 0 3px 0 10px;
  background: #fff;
  font-weight: 500;
}

.user {
  position: relative;
  width: 22px;
  height: 22px;
  border-radius: 50%;
  background: #5fa35f;
  color: #fff;
  font-size: 15px;
  line-height: 22px;
  text-align: center;
}

.badge {
  position: absolute;
  top: -4px;
  left: 17px;
  width: 15px;
  height: 15px;
  border-radius: 50%;
  background: #dc2447;
  font-size: 8px;
  line-height: 15px;
}

.symbol {
  justify-content: space-between;
  width: 106px;
  height: 23px;
  margin-left: 15px;
  padding: 0 1px 0 9px;
  border-radius: 12px;
  background: #ebebeb;
  font-size: 11px;
  font-weight: 700;
}
.symbol span {
  padding: 4px;
  border-radius: 50%;
  background: #fff;
}

.add {
  width: 18px;
  margin: 0 12px 0 9px;
}

.intervals {
  display: flex;
  justify-content: space-between;
  width: 422px;
  padding-left: 3px;
  border-left: 1px solid #e6e6e6;
}
.intervals button {
  padding: 0 4px;
  height: 27px;
  border-radius: 5px;
}
.on {
  background: #ebebeb;
}

.tools {
  flex: 1;
  display: flex;
  align-items: center;
  gap: 11px;
  margin-left: 5px;
}
.bar {
  border-left: 1px solid #e6e6e6;
  padding-left: 10px;
}
.near {
  margin-left: 2px;
}
.far {
  margin-left: 6px;
}
.faded {
  opacity: 0.4;
}
.bracket {
  width: 4px;
  height: 14px;
}

.trade {
  gap: 4px;
  height: 22px;
  margin: 0 7px 0 4px;
  padding: 0 8px 0 6px;
  border: 1px solid #f0f0f0;
  border-radius: 11px;
}

.publish {
  width: 58px;
  height: 23px;
  border-radius: 12px;
  background: #2a2a2a;
  color: #fff;
}

.tv-body {
  flex: 1;
  min-height: 0;
  display: grid;
  grid-template-columns: 43px minmax(0, 1fr) 37px;
  gap: 3px;
  padding-top: 4px;
}

.left-tools,
.right-tools {
  display: flex;
  flex-direction: column;
  align-items: center;
  background: #fff;
  border-radius: 5px 5px 0 0;
  overflow: hidden;
}
.left-tools {
  padding: 7px 1px 0 0;
}

.group {
  display: flex;
  flex-direction: column;
  flex: none;
  justify-content: space-between;
}
.g8 { height: 249px; }
.g2 { height: 59px; }
.g5 { height: 155px; }

.soft,
.dark {
  border-radius: 5px;
  background: #ebebeb;
}
.dark {
  background: #2a2a2a;
  color: #fff;
}
.star {
  margin-top: 12px;
}

.right-tools {
  gap: 10px;
  padding: 6px 0;
}
.right-tools button {
  width: 28px;
  height: 28px;
}
.right-tools hr {
  margin: -1px auto;
}
.space {
  flex: 1;
}

.center {
  display: flex;
  flex-direction: column;
  gap: 3px;
  min-width: 0;
}

.chart {
  flex: 1;
  min-height: 0;
  display: grid;
  grid-template: minmax(0, 1fr) 23px / minmax(0, 1fr) 60px;
  margin-bottom: -3px;
  border-radius: 4px 4px 0 0;
  background: #636363;
  color: #fff;
  overflow: hidden;
  font-size: 10px;
}

.plot {
  position: relative;
  overflow: hidden;
}

.candles {
  position: absolute;
  inset: 0;
}
.wick { stroke-width: 1; }
.up { stroke: #2a4bc0; }
.down { stroke: #1c1d22; }
.body-up { fill: #083ef5; }
.body-down { fill: #000; }
.lvl {
  fill: #909090;
  font-size: 10px;
}
.half {
  fill: #fff;
  font-size: 11px;
  font-weight: 700;
}

.legend {
  position: relative;
  padding: 6px 7px;
}

.title {
  display: flex;
  align-items: center;
  height: 16px;
  gap: 2px;
}
.title h1 {
  font-size: 13px;
  font-weight: 700;
  white-space: nowrap;
}
.flag {
  width: 10px;
  height: 10px;
  margin: 0 10px 0 7px;
}
.dot {
  width: 8px;
  height: 8px;
  margin-right: 8px;
  border-radius: 50%;
  background: #14895a;
}
.ohlc {
  color: #111;
  font-size: 11px;
  white-space: pre;
  background: rgba(96, 98, 106, 0.4);
}
.ohlc b {
  color: #fff;
}

.quotes {
  display: flex;
  align-items: center;
  gap: 5px;
  margin-top: 5px;
}
.quotes > span {
  width: 20px;
  font-size: 9px;
}
.quotes button {
  flex-direction: column;
  width: 66px;
  height: 28px;
  border-radius: 4px;
  font-size: 10px;
  line-height: 12px;
}
.quotes b {
  font-size: 11px;
}
.sell { background: #e3204b; }
.buy { background: #2f5cf5; }

.float-tools {
  position: absolute;
  left: 590px;
  top: 47px;
  width: 52px;
  height: 32px;
  display: flex;
  align-items: center;
  justify-content: space-between;
  padding: 0 6px;
  border-radius: 5px;
  background: #fff;
  color: #111;
  box-shadow: 0 1px 3px rgba(0, 0, 0, 0.4);
}

.order {
  position: absolute;
  left: 638px;
  top: 272px;
  display: flex;
  height: 17px;
  line-height: 15px;
  font-size: 11px;
}
.order button,
.limit {
  border-radius: 3px;
  background: #141515;
}
.order .o-buy {
  width: 29px;
  margin-right: 9px;
  background: #2f5cf5;
  font-weight: 700;
}
.order .tp,
.order .sl {
  width: 25px;
  border: 1px solid #0c0c0c;
  color: #1e5a44;
}
.order .sl {
  width: 24px;
  color: #a06f1c;
}
.o-five {
  width: 9px;
  overflow: hidden;
  font-weight: 700;
}
.limit {
  display: flex;
  border: 1px solid #16235c;
  color: #28398c;
}
.limit > * {
  width: 18px;
  text-align: center;
}
.limit span:nth-child(2) {
  width: 43px;
  border: solid #16235c;
  border-width: 0 1px;
}

.tv-logo {
  position: absolute;
  left: 9px;
  bottom: 9px;
  width: 28px;
  height: 16px;
  fill: #e4e4e4;
  stroke: #111;
  stroke-width: 1.5;
  overflow: visible;
}
.bolt {
  position: absolute;
  left: 505px;
  bottom: 1px;
  width: 20px;
  height: 20px;
}

.prices {
  position: relative;
  display: flex;
  flex-direction: column;
  justify-content: space-between;
  align-items: flex-end;
  padding: 35px 8px 0 0;
  margin-bottom: -1px;
  line-height: 12px;
  font-weight: 700;
}

.currency,
.currency-arrow {
  position: absolute;
  right: 4px;
  top: 4px;
  width: 52px;
  height: 20px;
  padding-left: 3px;
  border-radius: 3px;
  background: #0f0f0f;
  font-weight: 400;
  appearance: none;
}
.currency-arrow {
  right: 6px;
  top: 10px;
  width: 8px;
  height: 8px;
  padding: 0;
}

.tag {
  position: absolute;
  left: 1px;
  right: 4px;
  padding: 0 3px 0 6px;
  line-height: 14px;
  background: #000;
}
.t-order {
  top: 256px;
  height: 16px;
  line-height: 16px;
  background: #0e1018;
  color: #27357f;
}
.t-grey { background: #858585; }
.t-mid { top: 273px; }
.t-last {
  top: 298px;
  height: 27px;
  line-height: 12px;
  padding-top: 1px;
}
.t-cross {
  top: 355px;
  height: 18px;
  line-height: 18px;
  background: #363845;
}
.t-white {
  top: 411px;
  background: #fff;
  color: #111;
}
.t-low { top: 439px; }

.plus {
  position: absolute;
  left: -18px;
  top: 355px;
  width: 18px;
  height: 18px;
  background: #363845;
}

.times {
  position: relative;
  display: grid;
  grid-template-columns: repeat(17, minmax(0, 1fr));
  align-items: center;
  padding: 0 14px 0 8px;
  text-align: center;
  white-space: nowrap;
}
.time-tag {
  position: absolute;
  left: 692px;
  top: 1px;
  width: 128px;
  height: 20px;
  line-height: 20px;
  display: flex;
  justify-content: space-between;
  padding: 0 7px;
  border-radius: 2px;
  background: #363845;
}
.axis-set {
  color: #ddd;
}

.ranges {
  display: flex;
  align-items: center;
  gap: 9px;
  height: 32px;
  flex: none;
  padding: 0 5px 0 12px;
  background: #fff;
  border-radius: 0 0 4px 4px;
  font-size: 11px;
}
.goto {
  padding-left: 9px;
  border-left: 1px solid #e6e6e6;
}
.clock {
  margin-left: auto;
}
.adj {
  width: 37px;
  height: 27px;
  margin-left: 5px;
  border-radius: 5px;
  background: #ebebeb;
}

.panel {
  display: flex;
  align-items: center;
  gap: 6px;
  height: 33px;
  flex: none;
  padding: 0 9px 0 7px;
  background: #fff;
  border-radius: 4px 4px 0 0;
}
.panel-trade {
  width: 50px;
  height: 20px;
  margin-left: 4px;
  border: 1px solid #f0f0f0;
  border-radius: 5px;
}
.up {
  margin: 0 8px 0 auto;
}

/* chat popout */
.kick {
  display: flex;
  flex-direction: column;
  border-left: 1px solid #3c3c3c;
  background: #0b0b0b;
  font-family: Inter, sans-serif;
  min-height: 0;
  overflow: hidden;
}

.kick-title,
.kick-url {
  display: flex;
  align-items: center;
  width: 256px;
  flex: none;
  white-space: nowrap;
}
.kick-title {
  height: 27px;
  background: #3a3b3d;
  color: #9a9a9a;
  font-family: Roboto, sans-serif;
  font-size: 10px;
}
.kick-title span {
  flex: 1;
  margin-left: 4px;
}
.kick-title button {
  width: 38px;
}
.kick-url {
  height: 26px;
  padding-left: 3px;
  gap: 8px;
  background: #47484b;
  font-family: "Noto Sans", sans-serif;
}
.kick-url span {
  flex: 1;
}

.kick h2 {
  height: 32px;
  flex: none;
  border-bottom: 1px solid #242528;
  line-height: 30px;
  font-size: 12px;
  text-align: center;
  padding-left: 8px;
  color: #fff;
}

.messages {
  flex: 1;
  min-height: 0;
  padding: 3px 0 0 8px;
  line-height: 17px;
  color: #f4f4f4;
}
.messages p {
  padding: 4px 0;
}
.messages svg {
  display: inline-block;
  vertical-align: middle;
}
.messages .mic {
  width: 12px;
  height: 15px;
  margin: -3px 6px 0 1px;
}
.messages .emote {
  width: 20px;
  height: 20px;
  margin: -4px 0 -4px 1px;
}
.messages .big {
  width: 22px;
  height: 22px;
}

.pink { color: #dc5e85; }
.mint { color: #8cf5d4; }
.red { color: #c4123c; }
.orange { color: #ee9436; }

.new {
  display: flex;
  align-items: center;
  gap: 8px;
  margin: 4px 0 4px -7px;
  color: #53f32c;
  font-size: 12px;
  font-weight: 600;
}
.new::before,
.new::after {
  content: "";
  flex: 1;
  height: 1px;
  background: #3a9c26;
}

.emotes {
  display: flex;
  justify-content: space-between;
  padding: 0 15px 6px 4px;
}
.emotes svg {
  width: 18px;
  height: 18px;
}

.send {
  display: flex;
  align-items: center;
  padding: 0 0 9px 2px;
}
.box {
  display: flex;
  align-items: center;
  width: 163px;
  height: 38px;
  flex: none;
  padding: 0 12px;
  border: 1px solid #444;
  border-radius: 3px;
}
.mic-lg {
  width: 14px;
  height: 18px;
}
.box textarea {
  flex: 1;
  width: 80px;
  height: 26px;
  margin-left: 15px;
  padding-right: 30px;
  line-height: 13px;
  resize: none;
  overflow: hidden;
}
.box textarea::placeholder {
  color: #85888c;
}
.gear {
  width: 44px;
}
.chat-btn {
  width: 47px;
  height: 27px;
  border-radius: 3px;
  background: #53fc18;
  color: #14300a;
  font-size: 12px;
  font-weight: 500;
}

/* taskbar */
.taskbar {
  display: grid;
  grid-template-columns: 1fr auto 1fr;
  align-items: center;
  padding: 0 16px;
  border-top: 1px solid #4c544c;
  background: linear-gradient(90deg, #ece4dc, #e4dfdc 28%, #e4e6c4 45%, #e4ef9c 60%, #e6ee9c 75%, #f2edba);
  color: #2a2a2a;
  font-size: 9px;
  line-height: 13px;
}
.taskbar p span {
  display: block;
}

.weather {
  display: flex;
  align-items: center;
  gap: 7px;
}
.weather span {
  color: #666;
}

.dock {
  display: flex;
  align-items: center;
}
.app {
  position: relative;
  width: 37px;
  height: 34px;
}
.current {
  border-radius: 4px;
  background: #f4f8d8;
}
.current::after,
.running::after {
  content: "";
  position: absolute;
  bottom: 0;
  width: 14px;
  height: 3px;
  border-radius: 2px;
  background: #1871b8;
}
.running::after {
  width: 5px;
  background: #85894f;
}

.count {
  position: absolute;
  left: 20px;
  top: 1px;
  width: 13px;
  height: 13px;
  border-radius: 50%;
  background: #1878c0;
  color: #fff;
}

.search {
  display: flex;
  align-items: center;
  width: 180px;
  height: 26px;
  margin: 0 2px 0 4px;
  padding: 0 6px 0 8px;
  border-radius: 13px;
  background: #f7f7f3;
}
.search input {
  flex: 1;
  width: 60px;
  margin-left: 7px;
  font-size: 11px;
}
.search input::placeholder {
  color: #555;
}
.sport {
  width: 34px;
  height: 18px;
}

.tray {
  display: flex;
  align-items: center;
  justify-content: flex-end;
  gap: 7px;
  text-align: right;
  font-size: 10px;
}
.tray p {
  margin-left: 7px;
}
.tray .s12,
.tray .s16 {
  margin-right: 4px;
}
.blue {
  width: 12px;
  height: 16px;
  margin-right: 6px;
  color: #2a6f9f;
}
.battery {
  width: 18px;
  height: 12px;
}
```
